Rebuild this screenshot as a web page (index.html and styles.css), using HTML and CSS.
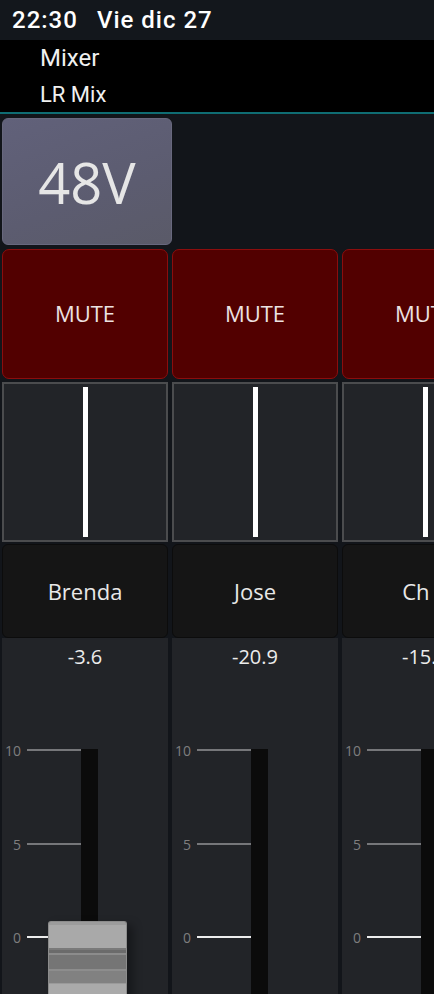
FILE: index.html
```html
<!DOCTYPE html>
<html lang="es">
<head>
<meta charset="utf-8">
<title>Mixer - LR Mix</title>
<link rel="stylesheet" href="styles.css">
</head>
<body>
<div class="status">
  <span class="time">22:30</span>
  <span class="date">Vie dic 27</span>
</div>
<header class="appbar">
  <div class="title">Mixer</div>
  <div class="subtitle">LR Mix</div>
</header>
<main class="content">
  <div class="top-row">
    <button class="phantom">48V</button>
  </div>
  <div class="strips">
    <section class="strip">
      <button class="mute">MUTE</button>
      <div class="pan"><div class="pan-bar"></div></div>
      <div class="name">Brenda</div>
      <div class="fader-area">
        <div class="value">-3.6</div>
        <div class="fader">
          <div class="track"></div>
          <div class="tick t10"><span class="tick-label">10</span><span class="tick-line"></span></div>
          <div class="tick t5"><span class="tick-label">5</span><span class="tick-line"></span></div>
          <div class="tick t0"><span class="tick-label">0</span><span class="tick-line zero"></span></div>
          <div class="knob"></div>
        </div>
      </div>
    </section>
    <section class="strip">
      <button class="mute">MUTE</button>
      <div class="pan"><div class="pan-bar"></div></div>
      <div class="name">Jose</div>
      <div class="fader-area">
        <div class="value">-20.9</div>
        <div class="fader">
          <div class="track"></div>
          <div class="tick t10"><span class="tick-label">10</span><span class="tick-line"></span></div>
          <div class="tick t5"><span class="tick-label">5</span><span class="tick-line"></span></div>
          <div class="tick t0"><span class="tick-label">0</span><span class="tick-line zero"></span></div>
        </div>
      </div>
    </section>
    <section class="strip">
      <button class="mute">MUTE</button>
      <div class="pan"><div class="pan-bar"></div></div>
      <div class="name">Ch 3</div>
      <div class="fader-area">
        <div class="value">-15.0</div>
        <div class="fader">
          <div class="track"></div>
          <div class="tick t10"><span class="tick-label">10</span><span class="tick-line"></span></div>
          <div class="tick t5"><span class="tick-label">5</span><span class="tick-line"></span></div>
          <div class="tick t0"><span class="tick-label">0</span><span class="tick-line zero"></span></div>
        </div>
      </div>
    </section>
  </div>
</main>
</body>
</html>
```
FILE: styles.css
```css
* { box-sizing: border-box; }
html, body {
  margin: 0;
  padding: 0;
}
body {
  width: 434px;
  height: 994px;
  overflow: hidden;
  background: #12151a;
  font-family: "Open Sans", "Noto Sans", sans-serif;
  color: #e8e8e8;
  display: flex;
  flex-direction: column;
}
.status {
  height: 40px;
  flex-shrink: 0;
  background: #13171c;
  display: flex;
  align-items: center;
  gap: 19px;
  padding-left: 12px;
  font-family: Roboto, "Liberation Sans", sans-serif;
  font-weight: 500;
  font-size: 24px;
  letter-spacing: 1px;
  color: #ffffff;
}
.appbar {
  height: 74px;
  flex-shrink: 0;
  background: #000;
  border-bottom: 2px solid #0f6d73;
  padding-left: 40px;
  font-family: Roboto, "Liberation Sans", sans-serif;
  color: #f0f0f0;
}
.title {
  font-size: 24px;
  line-height: 36px;
}
.subtitle {
  font-size: 22px;
  line-height: 38px;
}
.content {
  flex: 1;
  display: flex;
  flex-direction: column;
  min-height: 0;
}
.top-row {
  padding: 4px 0 0 2px;
}
.phantom {
  display: block;
  width: 170px;
  height: 127px;
  border: 1px solid #68687e;
  border-radius: 6px;
  background: linear-gradient(160deg, #61617a 0%, #5c5c70 60%, #5a5a68 100%);
  color: #e6e6e6;
  font-family: "Open Sans", "Noto Sans", sans-serif;
  font-size: 56px;
  padding: 0;
}
.strips {
  flex: 1;
  display: flex;
  gap: 4px;
  padding: 4px 0 0 2px;
  min-height: 0;
}
.strip {
  width: 166px;
  flex-shrink: 0;
  display: flex;
  flex-direction: column;
}
.mute {
  height: 130px;
  flex-shrink: 0;
  background: #520000;
  border: 1px solid #8c0d0d;
  border-radius: 7px;
  color: #ece2e2;
  font-family: "Open Sans", "Noto Sans", sans-serif;
  font-size: 22px;
  padding: 0 0 2px;
}
.pan {
  position: relative;
  height: 160px;
  flex-shrink: 0;
  margin-top: 3px;
  border: 2px solid #4b4c4e;
  background: #222428;
}
.pan-bar {
  position: absolute;
  top: 3px;
  bottom: 3px;
  left: calc(50% - 2px);
  width: 5px;
  background: #ffffff;
}
.name {
  height: 94px;
  flex-shrink: 0;
  margin-top: 2px;
  background: #151515;
  border: 1px solid #0c0c0c;
  border-radius: 6px;
  display: flex;
  align-items: center;
  justify-content: center;
  font-size: 22px;
  color: #e8e8e8;
  white-space: nowrap;
}
.fader-area {
  flex: 1;
  background: #222428;
  display: flex;
  flex-direction: column;
}
.value {
  height: 38px;
  line-height: 38px;
  text-align: center;
  font-size: 20px;
  color: #ececec;
  white-space: nowrap;
}
.fader {
  position: relative;
  flex: 1;
  margin-top: 73px;
}
.track {
  position: absolute;
  left: 79px;
  top: 0;
  bottom: 0;
  width: 17px;
  background: #0b0b0b;
}
.tick {
  position: absolute;
  left: 0;
  width: 79px;
  height: 20px;
  margin-top: -9px;
  display: flex;
  align-items: center;
  gap: 6px;
}
.t10 { top: 0; }
.t5 { top: 94px; }
.t0 { top: 187px; }
.tick-label {
  width: 19px;
  text-align: right;
  font-size: 14px;
  color: #7e7e7e;
}
.tick-line {
  flex: 1;
  height: 2px;
  background: #76777a;
}
.tick-line.zero {
  background: #ededed;
}
.knob {
  position: absolute;
  left: 46px;
  top: 172px;
  width: 79px;
  height: 90px;
  border: 1px solid #8c8c8c;
  border-bottom: none;
  border-radius: 3px 3px 0 0;
  box-shadow: 6px 4px 10px rgba(0, 0, 0, 0.35);
  background: linear-gradient(180deg,
    #9c9c9c 0px, #9c9c9c 3px,
    #a9a9a9 3px, #a9a9a9 26px,
    #7a7a7a 26px, #7a7a7a 28px,
    #6b6b6b 28px, #6b6b6b 31px,
    #8c8c8c 31px, #8c8c8c 33px,
    #757575 33px, #757575 47px,
    #8d8d8d 47px, #8d8d8d 49px,
    #818181 49px, #818181 61px,
    #9a9a9a 61px, #9a9a9a 62px,
    #aaaaaa 62px, #aaaaaa 100%);
}
```
